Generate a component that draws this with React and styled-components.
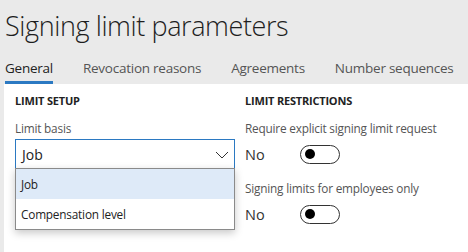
import React, { useState } from "react";
import styled, { createGlobalStyle } from "styled-components";

const GlobalStyle = createGlobalStyle`
  html, body {
    margin: 0;
    padding: 0;
    background: #eaeaea;
    font-family: "Open Sans", "Noto Sans", sans-serif;
    color: #222;
  }
  * { box-sizing: border-box; }
`;

const Page = styled.div`
  width: 468px;
  height: 252px;
  overflow: hidden;
  display: flex;
  flex-direction: column;
`;

const Title = styled.h1`
  margin: 0;
  padding: 7px 0 0 5px;
  height: 51px;
  font-size: 27px;
  font-weight: 300;
  line-height: 38px;
  color: #1e1e1e;
  letter-spacing: -0.4px;
`;

const Tabs = styled.div`
  display: flex;
  gap: 30px;
  padding-left: 5px;
  height: 33px;
  align-items: flex-end;
`;

const Tab = styled.div`
  font-size: 13.5px;
  line-height: 18px;
  padding-bottom: 4px;
  color: ${({ $active }) => ($active ? "#222" : "#555")};
  border-bottom: 3px solid ${({ $active }) => ($active ? "#2b79c2" : "transparent")};
  white-space: nowrap;
  letter-spacing: -0.25px;
`;

const Panel = styled.div`
  flex: 1;
  margin-left: 4px;
  background: #fff;
  padding: 10px 0 0 11px;
  display: grid;
  grid-template-columns: 220px 1fr;
  column-gap: 10px;
  align-items: start;
`;

const Column = styled.div`
  display: flex;
  flex-direction: column;
  position: relative;
  > * { flex-shrink: 0; }
`;

const SectionTitle = styled.div`
  font-size: 11px;
  font-weight: 700;
  line-height: 14px;
  color: #222;
  margin-bottom: 12px;
  letter-spacing: -0.2px;
`;

const Label = styled.div`
  font-size: 11.8px;
  line-height: 16px;
  color: #555;
  letter-spacing: -0.2px;
  margin-bottom: ${({ $gap }) => $gap || 4}px;
  white-space: nowrap;
`;

const Select = styled.div`
  height: 31px;
  border: 1px solid #2b79c2;
  display: flex;
  align-items: center;
  justify-content: space-between;
  padding: 0 5px 0 6px;
  font-size: 14px;
  color: #222;
`;

const Menu = styled.div`
  position: absolute;
  top: 74px;
  left: 0;
  width: 220px;
  border: 1px solid #8a8a8a;
  background: #fff;
  box-shadow: 0 3px 8px rgba(0, 0, 0, 0.22);
  z-index: 2;
`;

const Option = styled.div`
  height: 30px;
  display: flex;
  align-items: center;
  padding-left: 5px;
  font-size: 11.8px;
  letter-spacing: -0.2px;
  color: #222;
  background: ${({ $selected }) => ($selected ? "#deeaf8" : "#fff")};
`;

const ToggleRow = styled.div`
  display: flex;
  align-items: center;
  height: 20px;
  margin-bottom: 16px;
`;

const ToggleText = styled.span`
  width: 55px;
  font-size: 14.5px;
  color: #333;
`;

const Switch = styled.div`
  width: 40px;
  height: 19px;
  border: 1.5px solid #333;
  border-radius: 10px;
  display: flex;
  align-items: center;
  padding-left: 4px;
`;

const Knob = styled.div`
  width: 10px;
  height: 10px;
  border-radius: 50%;
  background: #000;
`;

const Chevron = () => (
  <svg width="14" height="8" viewBox="0 0 14 8">
    <path d="M1 1 L7 7 L13 1" fill="none" stroke="#333" strokeWidth="1" />
  </svg>
);

const Toggle = () => (
  <ToggleRow>
    <ToggleText>No</ToggleText>
    <Switch>
      <Knob />
    </Switch>
  </ToggleRow>
);

export default function App() {
  const [basis] = useState("Job");
  return (
    <Page>
      <GlobalStyle />
      <Title>Signing limit parameters</Title>
      <Tabs>
        <Tab $active>General</Tab>
        <Tab>Revocation reasons</Tab>
        <Tab>Agreements</Tab>
        <Tab>Number sequences</Tab>
      </Tabs>
      <Panel>
        <Column>
          <SectionTitle>LIMIT SETUP</SectionTitle>
          <Label $gap={3}>Limit basis</Label>
          <Select>
            {basis}
            <Chevron />
          </Select>
          <Menu>
            <Option $selected>Job</Option>
            <Option>Compensation level</Option>
          </Menu>
        </Column>
        <Column>
          <SectionTitle>LIMIT RESTRICTIONS</SectionTitle>
          <Label $gap={8}>Require explicit signing limit request</Label>
          <Toggle />
          <Label $gap={8}>Signing limits for employees only</Label>
          <Toggle />
        </Column>
      </Panel>
    </Page>
  );
}
